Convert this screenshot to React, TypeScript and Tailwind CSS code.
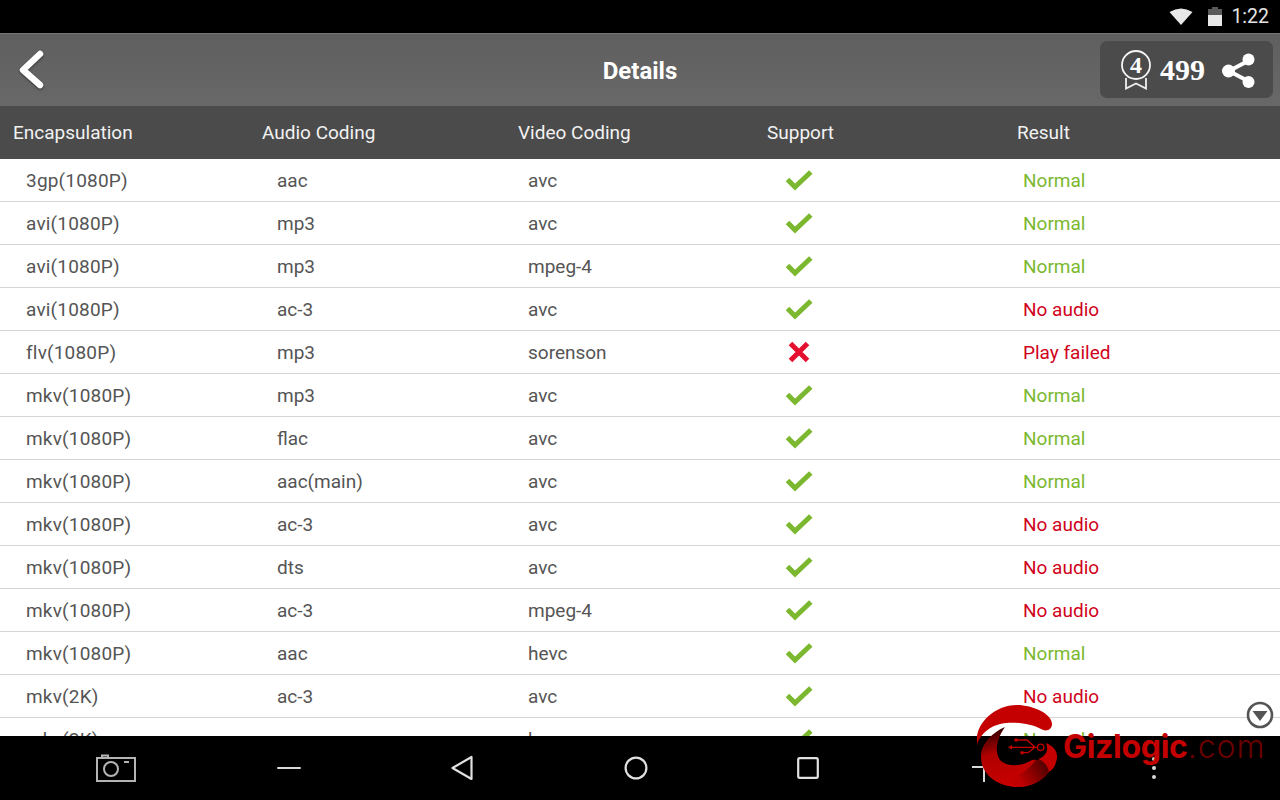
const rows: [string, string, string, boolean, string][] = [
  ["3gp(1080P)", "aac", "avc", true, "Normal"],
  ["avi(1080P)", "mp3", "avc", true, "Normal"],
  ["avi(1080P)", "mp3", "mpeg-4", true, "Normal"],
  ["avi(1080P)", "ac-3", "avc", true, "No audio"],
  ["flv(1080P)", "mp3", "sorenson", false, "Play failed"],
  ["mkv(1080P)", "mp3", "avc", true, "Normal"],
  ["mkv(1080P)", "flac", "avc", true, "Normal"],
  ["mkv(1080P)", "aac(main)", "avc", true, "Normal"],
  ["mkv(1080P)", "ac-3", "avc", true, "No audio"],
  ["mkv(1080P)", "dts", "avc", true, "No audio"],
  ["mkv(1080P)", "ac-3", "mpeg-4", true, "No audio"],
  ["mkv(1080P)", "aac", "hevc", true, "Normal"],
  ["mkv(2K)", "ac-3", "avc", true, "No audio"],
  ["mkv(2K)", "aac", "hevc", true, "Normal"],
];

function Check() {
  return (
    <svg width="28" height="22" viewBox="0 0 28 22">
      <path d="M2.5 10.5 L10 18 L25.8 3" fill="none" stroke="#7cb82f" strokeWidth="5" />
    </svg>
  );
}

function Cross() {
  return (
    <svg width="22" height="22" viewBox="0 0 22 22">
      <path d="M2.5 2.5 L19.5 19.5 M19.5 2.5 L2.5 19.5" fill="none" stroke="#e60f2d" strokeWidth="5" />
    </svg>
  );
}

export default function App() {
  return (
    <div className="relative flex h-[800px] w-[1280px] flex-col overflow-hidden bg-white font-['Roboto',sans-serif]">
      <div className="flex h-[33px] shrink-0 items-center justify-end bg-black pr-[11px] text-[19.5px] text-[#e4e4e4]">
        <svg width="24" height="17" viewBox="0 0 24 17" className="mr-[15px]">
          <path d="M0.5 4 Q12 -3 23.5 4 L12 17 Z" fill="#e8e8e8" />
        </svg>
        <svg width="14" height="19" viewBox="0 0 14 19" className="mr-[9px]">
          <path d="M4 0 H10 V2 H14 V19 H0 V2 H4 Z" fill="#5a5a5a" />
          <path d="M0 8 H14 V19 H0 Z" fill="#e8e8e8" />
        </svg>
        <span>1:22</span>
      </div>

      <div className="relative flex h-[73px] shrink-0 items-center justify-center border-t border-[#757575] bg-gradient-to-b from-[#5f5f5f] to-[#686868] pt-[2px]">
        <svg width="30" height="44" viewBox="0 0 30 44" className="absolute left-[16px] top-[15px] drop-shadow-[0_1px_1px_rgba(0,0,0,0.5)]">
          <path d="M24 5 L7 21 L24 36" fill="none" stroke="#ffffff" strokeWidth="6.5" strokeLinecap="round" strokeLinejoin="round" />
        </svg>
        <span className="text-[24px] font-bold text-white">Details</span>
        <div className="absolute left-[1100px] top-[7px] flex h-[57px] w-[173px] items-center rounded-[7px] bg-[#4b4b4b]">
          <svg width="32" height="40" viewBox="0 0 32 40" className="ml-[20px] shrink-0">
            <circle cx="16" cy="15" r="14" fill="none" stroke="#f5f5f5" strokeWidth="1.8" />
            <text x="16" y="23" textAnchor="middle" fill="#ffffff" fontSize="24" fontWeight="700" fontFamily="'Liberation Serif', serif">4</text>
            <path d="M6 28 V38.5 L16 33.5 L26 38.5 V28" fill="none" stroke="#f0f0f0" strokeWidth="1.8" />
          </svg>
          <span className="ml-[8px] font-['Liberation_Serif',serif] text-[30px] font-bold leading-none text-white">499</span>
          <svg width="36" height="38" viewBox="0 0 36 38" className="ml-[16px] mt-[2px] shrink-0">
            <path d="M27 9 L8 19 L27 29" fill="none" stroke="#ffffff" strokeWidth="4" />
            <circle cx="27.5" cy="7.5" r="6" fill="#ffffff" />
            <circle cx="7.5" cy="19" r="6.5" fill="#ffffff" />
            <circle cx="27.5" cy="30" r="6" fill="#ffffff" />
          </svg>
        </div>
      </div>

      <div className="grid h-[53px] shrink-0 grid-cols-[249px_256px_249px_250px_1fr] items-center bg-[#4b4b4b] pl-[13px] pt-[2px] text-[19px] text-[#f2f2f2]">
        <span>Encapsulation</span>
        <span>Audio Coding</span>
        <span>Video Coding</span>
        <span>Support</span>
        <span>Result</span>
      </div>

      <div className="min-h-0 flex-1 overflow-hidden">
        {rows.map((r, i) => (
          <div
            key={i}
            className="grid h-[43px] grid-cols-[251px_251px_257px_238px_1fr] items-center border-b border-[#d4d4d4] pl-[26px] text-[19px] text-[#555555]"
          >
            <span className="mt-[2px] tracking-[0.2px]">{r[0]}</span>
            <span className="mt-[2px]">{r[1]}</span>
            <span className="mt-[2px]">{r[2]}</span>
            <span className="flex h-[22px] items-center">{r[3] ? <Check /> : <span className="ml-[3px] flex"><Cross /></span>}</span>
            <span className={r[4] === "Normal" ? "mt-[2px] text-[#7cb82f]" : "mt-[2px] text-[#d0021b]"}>{r[4]}</span>
          </div>
        ))}
      </div>

      <div className="flex h-[64px] shrink-0 items-center bg-black">
        <svg width="40" height="28" viewBox="0 0 40 28" className="ml-[96px] shrink-0">
          <path d="M1 4 H39 V27 H1 Z M6 3 V1.5 H12 V3" fill="none" stroke="#b4b4b4" strokeWidth="2" />
          <circle cx="15" cy="15" r="7" fill="none" stroke="#b4b4b4" strokeWidth="2" />
          <rect x="28" y="7" width="5" height="2" fill="#b4b4b4" />
        </svg>
        <div className="ml-[141px] h-[2px] w-[24px] shrink-0 rounded-full bg-[#d8d8d8]" />
        <svg width="24" height="26" viewBox="0 0 24 26" className="ml-[149px] shrink-0">
          <path d="M21.5 2 V24 L2.5 13 Z" fill="none" stroke="#e0e0e0" strokeWidth="2.2" strokeLinejoin="round" />
        </svg>
        <svg width="24" height="24" viewBox="0 0 24 24" className="ml-[150px] shrink-0">
          <circle cx="12" cy="12" r="10.4" fill="none" stroke="#e0e0e0" strokeWidth="2.2" />
        </svg>
        <svg width="22" height="22" viewBox="0 0 22 22" className="ml-[149px] shrink-0">
          <rect x="1.2" y="1.2" width="19.6" height="19.6" rx="1.5" fill="none" stroke="#e0e0e0" strokeWidth="2.2" />
        </svg>
      </div>

      {/* scroll-down button */}
      <svg width="28" height="28" viewBox="0 0 28 28" className="absolute left-[1246px] top-[701px]">
        <circle cx="14" cy="14" r="12" fill="#ffffff" stroke="#555555" strokeWidth="2.6" />
        <path d="M6.5 10 H21.5 L14 20 Z" fill="#555555" />
      </svg>

      {/* more dots */}
      <div className="absolute left-[1152px] top-[757px] flex flex-col gap-[5px]">
        <div className="h-[4px] w-[4px] rounded-full bg-[#d8d8d8]" />
        <div className="h-[4px] w-[4px] rounded-full bg-[#d8d8d8]" />
        <div className="h-[4px] w-[4px] rounded-full bg-[#d8d8d8]" />
      </div>

      {/* add icon remnant */}
      <svg width="14" height="16" viewBox="0 0 14 16" className="absolute left-[972px] top-[766px]">
        <path d="M0 1 H12 V16" fill="none" stroke="#d8d8d8" strokeWidth="2" />
      </svg>

      {/* watermark logo */}
      <svg width="95" height="95" viewBox="0 0 95 95" className="absolute left-[970px] top-[700px]">
        <defs>
          <linearGradient id="lg" x1="0.3" y1="0.02" x2="0.6" y2="0.9">
            <stop offset="0" stopColor="#3a0000" />
            <stop offset="0.4" stopColor="#b00000" />
            <stop offset="1" stopColor="#c80000" />
          </linearGradient>
          <linearGradient id="lg2" x1="0.3" y1="0.9" x2="1" y2="0.6">
            <stop offset="0" stopColor="#c00000" />
            <stop offset="1" stopColor="#5a0000" />
          </linearGradient>
        </defs>
        <path d="M7 40 C6 24 24 5 47 5 C63 5 82 14 82 24 C82 30 76 32 71 29 C58 22 34 20 22 27 C15 31 9 37 7 45 Z" fill="#c40000" />
        <path d="M35 27 C24 32 11 42 11 57 C11 76 30 87 47 87 C62 87 74 80 80 70 C77 62 70 59 62 60 C52 66 38 68 30 60 C24 52 27 38 35 27 Z" fill="url(#lg)" />
        <path d="M40 78 C52 74 60 68 66 60 C72 60 77 64 80 70 C74 80 62 87 47 87 C44 87 42 84 40 78 Z" fill="url(#lg2)" />
        <path d="M76 43 C86 47 89 55 86 62 C85 67 82 70 79 72 C78 66 74 61 68 59 C76 56 79 50 76 43 Z" fill="#c40000" />
        <g fill="none" stroke="#c40000" strokeWidth="1.3">
          <path d="M41 47.3 H67 M46 40 H57 L65 47.3 L58 52.7 H52" />
          <circle cx="70.7" cy="47.3" r="3.2" />
        </g>
        <circle cx="46" cy="40" r="1.8" fill="#c40000" />
        <circle cx="52" cy="52.7" r="1.8" fill="#c40000" />
        <path d="M38 47.3 L42 45 V49.6 Z" fill="#c40000" />
      </svg>
      <div className="absolute left-[1063px] top-[727px] flex items-baseline font-['Inter',sans-serif] text-[32px] leading-[40px] tracking-[-0.3px]">
        <span className="font-bold text-[#c40000]">Gizlogic</span>
        <span className="font-light tracking-[1px] text-[#6a0000]">.com</span>
      </div>
    </div>
  );
}
